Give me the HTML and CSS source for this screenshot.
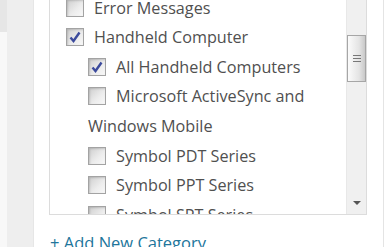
FILE: index.html
```html
<!DOCTYPE html>
<html>
<head>
    <title>Categories</title>
    <link rel="stylesheet" href="styles.css">
</head>
<body>
    <div class="page">
        <div class="edge">
            <div class="edge-top"></div>
        </div>
        <div class="sidebar"></div>
        <div class="main">
            <div class="catbox">
                <ul class="checklist">
                    <li><label><span class="check"></span>Error Messages</label></li>
                    <li>
                        <label><span class="check checked"><svg viewBox="0 0 16 16"><path d="M3.5 8.5 L6.5 12 L12.5 3.5" /></svg></span>Handheld Computer</label>
                        <ul class="children">
                            <li><label><span class="check checked"><svg viewBox="0 0 16 16"><path d="M3.5 8.5 L6.5 12 L12.5 3.5" /></svg></span>All Handheld Computers</label></li>
                            <li><label><span class="check"></span>Microsoft ActiveSync and Windows Mobile</label></li>
                            <li><label><span class="check"></span>Symbol PDT Series</label></li>
                            <li><label><span class="check"></span>Symbol PPT Series</label></li>
                            <li><label><span class="check"></span>Symbol SPT Series</label></li>
                        </ul>
                    </li>
                </ul>
                <div class="scrollbar">
                    <div class="thumb">
                        <span></span><span></span><span></span>
                    </div>
                    <div class="track-fill"></div>
                    <div class="arrow-down"></div>
                </div>
            </div>
            <a class="add-new" href="#">+ Add New Category</a>
        </div>
    </div>
</body>
</html>
```

FILE: styles.css
```css
body {
    margin: 0;
    font-family: "Open Sans", "Liberation Sans", sans-serif;
    background: #fff;
    overflow: hidden;
}

.page {
    display: flex;
    height: 247px;
}

.edge {
    width: 7px;
    background: #f8f8f8;
}

.edge-top {
    height: 32px;
    background: #e6e6e6;
}

.sidebar {
    width: 26px;
    background: #eeeeee;
    border-right: 1px solid #e6e6e6;
}

.main {
    width: 334px;
    padding-left: 15px;
    background: #fff;
    border-right: 1px solid #e4e4e4;
}

.catbox {
    display: flex;
    width: 316px;
    height: 233px;
    margin-top: -20px;
    border: 1px solid #dcdcdc;
    background: #fff;
    overflow: hidden;
}

.checklist {
    flex: 1;
    list-style: none;
    margin: 0;
    padding: 12.7px 0 0 16px;
    font-size: 16.2px;
    line-height: 29.6px;
    color: #505050;
}

.checklist li {
    margin: 0;
}

.children {
    list-style: none;
    margin: 0 0 0 22px;
    padding: 0;
}

.check {
    display: inline-block;
    box-sizing: border-box;
    width: 18px;
    height: 18px;
    margin-right: 10px;
    vertical-align: -3px;
    border: 1px solid #a3a3a3;
    background: linear-gradient(135deg, #cfcfcf, #ededed 60%, #f8f8f8);
    box-shadow: inset 1px 1px 2px rgba(0,0,0,0.15);
}

.check svg {
    display: block;
    width: 16px;
    height: 16px;
    fill: none;
    stroke: #3b4a9c;
    stroke-width: 2.4;
}

.scrollbar {
    width: 20px;
    display: flex;
    flex-direction: column;
    background: #f0f0f0;
    border-left: 1px solid #e8e8e8;
    box-sizing: border-box;
    padding-top: 54px;
}

.thumb {
    height: 47px;
    box-sizing: border-box;
    border: 1px solid #a6a6a6;
    background: linear-gradient(to right, #fbfbfb, #e4e4e4 65%, #c9c9c9);
    display: flex;
    flex-direction: column;
    align-items: center;
    justify-content: center;
    gap: 2px;
}

.thumb span {
    width: 8px;
    height: 1px;
    background: #777;
}

.track-fill {
    flex: 1;
}

.arrow-down {
    width: 0;
    height: 0;
    margin: 0 0 9px 6px;
    border-left: 4px solid transparent;
    border-right: 4px solid transparent;
    border-top: 4px solid #555;
}

.add-new {
    display: block;
    margin-top: 17px;
    padding-left: 1px;
    font-size: 16.5px;
    line-height: 22px;
    color: #21759b;
    text-decoration: none;
}
```
